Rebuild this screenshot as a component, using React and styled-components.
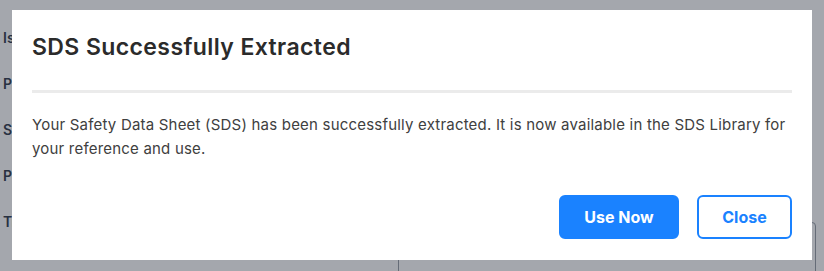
import React from 'react';
import styled, { createGlobalStyle } from 'styled-components';

const GlobalStyle = createGlobalStyle`
  * { box-sizing: border-box; }
  html, body { margin: 0; padding: 0; }
  body {
    width: 824px;
    height: 271px;
    overflow: hidden;
    background: #ffffff;
    font-family: Inter, "Noto Sans", sans-serif;
  }
`

const LABELS = ['Is', 'P', 'S', 'P', 'Tr']

const App = () => {
  return (
    <>
      <GlobalStyle />
      <Page>
        <Labels>
          {LABELS.map((label, i) => (
            <Label key={i}>{label}</Label>
          ))}
        </Labels>
        <FieldBox />
      </Page>

      <Overlay>
        <Modal role="dialog" aria-labelledby="sds-title">
          <Title id="sds-title">SDS Successfully Extracted</Title>
          <Divider />
          <Body>
            Your Safety Data Sheet (SDS) has been successfully extracted. It is now available in the SDS Library for
            your reference and use.
          </Body>
          <Actions>
            <ActionButton $primary>Use Now</ActionButton>
            <ActionButton>Close</ActionButton>
          </Actions>
        </Modal>
      </Overlay>
    </>
  );
};

export default App;

const Page = styled.div`
  position: relative;
  width: 824px;
  height: 271px;
  overflow: hidden;
`

const Labels = styled.div`
  display: flex;
  flex-direction: column;
  gap: 29px;
  padding: 29px 0 0 3px;
`

const Label = styled.div`
  font-size: 14px;
  line-height: 17px;
  font-weight: 600;
  color: #374151;
`

const FieldBox = styled.div`
  position: absolute;
  left: 398px;
  top: 222px;
  width: 418px;
  height: 80px;
  border: 1px solid #9aa0a8;
  border-radius: 4px;
`

const Overlay = styled.div`
  position: fixed;
  inset: 0;
  background: rgba(17, 24, 39, 0.38);
  display: flex;
  align-items: flex-start;
  justify-content: flex-start;
  padding: 10px 0 0 12px;
`

const Modal = styled.div`
  width: 800px;
  height: 250px;
  background: #ffffff;
  padding: 21px 20px 21px 20px;
  display: flex;
  flex-direction: column;
`

const Title = styled.h2`
  margin: 0;
  font-size: 23px;
  line-height: 33px;
  font-weight: 600;
  letter-spacing: 0.4px;
  color: #2b2b2b;
`

const Divider = styled.hr`
  margin: 26px 0 0;
  border: 0;
  height: 3px;
  background: #ebebeb;
`

const Body = styled.p`
  margin: 20px 0 0;
  font-size: 15px;
  line-height: 24px;
  letter-spacing: 0.2px;
  color: #404040;
`

const Actions = styled.div`
  margin-top: auto;
  display: flex;
  justify-content: flex-end;
  gap: 18px;
`

const ActionButton = styled.button`
  width: ${p => (p.$primary ? '120px' : '95px')};
  height: 44px;
  padding: 0;
  border-radius: 6px;
  border: 2px solid #1a82ff;
  background: ${p => (p.$primary ? '#1a82ff' : '#ffffff')};
  color: ${p => (p.$primary ? '#ffffff' : '#1a82ff')};
  font-family: Inter, "Noto Sans", sans-serif;
  font-size: 16px;
  font-weight: 700;
  cursor: pointer;
`
